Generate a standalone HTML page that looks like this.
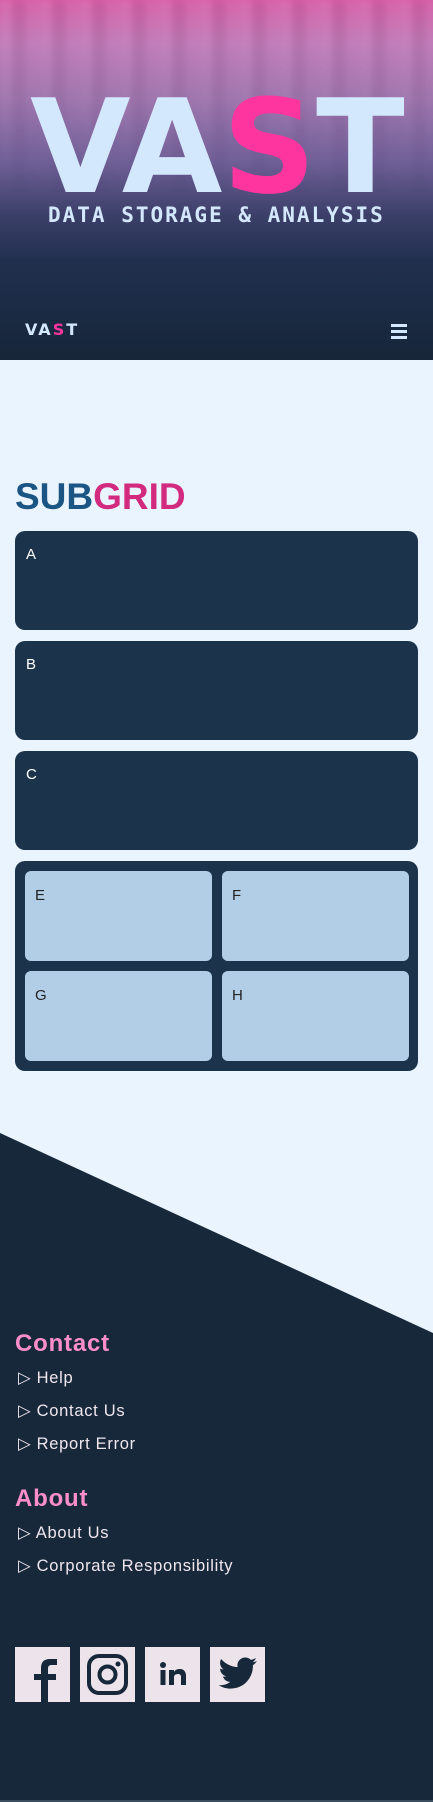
<!DOCTYPE html>
<html><head><meta charset="utf-8"><style>
*{margin:0;padding:0;box-sizing:border-box}
body{width:433px;height:1802px;background:#eaf4ff;font-family:"Liberation Sans",sans-serif;position:relative;overflow:hidden}
.hero{position:absolute;left:0;top:0;width:433px;height:360px;background:linear-gradient(180deg,#d760a8 0%,#c07ab8 12%,#9d74ad 28%,#6e5e96 45%,#3b3f68 60%,#22304f 72%,#1b2b45 85%,#172638 100%)}
.hero .stripes{position:absolute;left:0;top:0;width:433px;height:200px;background:repeating-linear-gradient(90deg,rgba(255,255,255,0.06) 0 12px,rgba(0,0,0,0.05) 12px 26px,rgba(255,255,255,0.03) 26px 40px);-webkit-mask:linear-gradient(180deg,#000 20%,transparent 100%);filter:blur(3px)}
.big{position:absolute;left:30px;top:72px;font-family:"DejaVu Sans","Liberation Sans",sans-serif;font-weight:bold;font-size:130px;line-height:150px;letter-spacing:0;color:#d4e8fd;white-space:nowrap}
.pk{color:#ff359f}
.sub{position:absolute;left:48px;top:203px;font-family:"DejaVu Sans Mono","Liberation Mono",monospace;font-weight:bold;font-size:21px;letter-spacing:2px;color:#d4e8fd;white-space:nowrap}
.nav{position:absolute;left:25px;top:320px;font-family:"DejaVu Sans",sans-serif;font-weight:bold;font-size:16px;letter-spacing:2px;color:#d4e8fd}
.ham{position:absolute;left:391px;top:324px;width:16px}
.ham i{display:block;height:3px;background:#d4e8fd;margin-bottom:3px}
h1{position:absolute;left:15px;top:476px;font-size:37px;font-weight:bold;color:#1b5584}
h1 span{color:#d12a7f}
.card{position:absolute;left:15px;width:403px;height:99px;background:#1b344c;border-radius:10px;color:#fff;font-size:15px;padding:15px 0 0 11px}
.box{position:absolute;left:15px;top:861px;width:403px;height:210px;background:#1b344c;border-radius:10px}
.in{position:absolute;width:187px;height:90px;background:#b2cee6;border-radius:6px;color:#222;font-size:15px;padding:16px 0 0 10px}
.foot{position:absolute;left:0;top:0;width:433px;height:1802px;background:#16283a;clip-path:polygon(0 1133px,433px 1333px,433px 1800px,0 1800px)}
.h2{position:absolute;left:15px;font-size:24px;font-weight:bold;color:#fd8ecb;letter-spacing:0.8px}
.lnk{position:absolute;left:18px;font-size:16.5px;letter-spacing:0.7px;color:#f0e6ee}
.ic{position:absolute;top:1647px;width:55px;height:55px;background:#ede3ea;overflow:hidden}
.bot{position:absolute;left:0;top:1800px;width:433px;height:2px;background:#3a4e60}
</style></head><body>
<div class="hero"><div class="stripes"></div>
<div class="big">VA<span class="pk">S</span>T</div>
<div class="sub">DATA STORAGE &amp; ANALYSIS</div>
<div class="nav">VA<span class="pk">S</span>T</div>
<div class="ham"><i></i><i></i><i></i></div>
</div>
<h1>SUB<span>GRID</span></h1>
<div class="card" style="top:531px">A</div>
<div class="card" style="top:641px">B</div>
<div class="card" style="top:751px">C</div>
<div class="box">
<div class="in" style="left:10px;top:10px">E</div>
<div class="in" style="left:207px;top:10px">F</div>
<div class="in" style="left:10px;top:110px">G</div>
<div class="in" style="left:207px;top:110px">H</div>
</div>
<div class="foot"></div>
<div class="h2" style="top:1330px">Contact</div>
<div class="lnk" style="top:1368px">▷ Help</div>
<div class="lnk" style="top:1401px">▷ Contact Us</div>
<div class="lnk" style="top:1434px">▷ Report Error</div>
<div class="h2" style="top:1485px">About</div>
<div class="lnk" style="top:1523px">▷ About Us</div>
<div class="lnk" style="top:1556px">▷ Corporate Responsibility</div>
<div class="ic" style="left:15px"><svg width="55" height="55" viewBox="0 0 55 55"><path d="M33 55V33h8v-6h-8v-5c0-3 1-4 4-4h5v-6h-7c-6 0-9 3-9 9v6h-7v6h7v22z" fill="#16283a"/></svg></div>
<div class="ic" style="left:80px"><svg width="55" height="55" viewBox="0 0 55 55"><rect x="9" y="9" width="37" height="37" rx="10" fill="none" stroke="#16283a" stroke-width="4"/><circle cx="27.5" cy="27.5" r="8" fill="none" stroke="#16283a" stroke-width="4"/><circle cx="38" cy="17" r="2.5" fill="#16283a"/></svg></div>
<div class="ic" style="left:145px"><svg width="55" height="55" viewBox="0 0 55 55"><circle cx="18" cy="18" r="3" fill="#16283a"/><rect x="15.5" y="23" width="5" height="15" fill="#16283a"/><path d="M24 23h5v2c1-2 3-3 6-3 4 0 6 3 6 7v9h-5v-8c0-2-1-3-3-3s-4 1-4 3v8h-5z" fill="#16283a"/></svg></div>
<div class="ic" style="left:210px"><svg width="55" height="55" viewBox="0 0 55 55"><path d="M47 14c-1.5.7-3 1-4.5 1.2 1.6-1 2.8-2.4 3.4-4.2-1.5.9-3.2 1.5-5 1.9-1.4-1.5-3.5-2.4-5.7-2.4-4.3 0-7.8 3.5-7.8 7.8 0 .6.1 1.2.2 1.8C21 19.8 15 16.6 11.1 12c-.7 1.2-1 2.5-1 4 0 2.7 1.4 5.1 3.5 6.5-1.3 0-2.5-.4-3.5-1v.1c0 3.8 2.7 6.9 6.3 7.7-.7.2-1.4.3-2 .3-.5 0-1 0-1.5-.1 1 3.1 3.9 5.4 7.3 5.4-2.7 2.1-6 3.3-9.7 3.3-.6 0-1.3 0-1.9-.1 3.5 2.2 7.6 3.5 12 3.5 14.4 0 22.3-11.9 22.3-22.3v-1c1.5-1.1 2.8-2.5 3.9-4.1z" fill="#16283a"/></svg></div>
<div class="bot"></div>
</body></html>
